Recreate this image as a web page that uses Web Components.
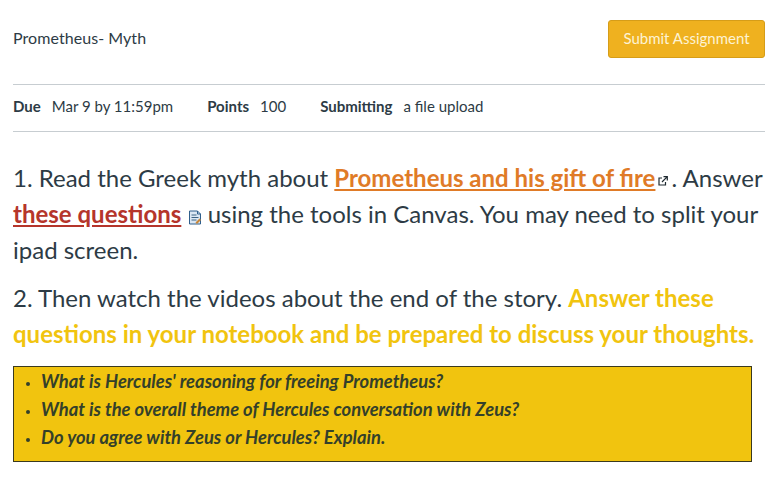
<!DOCTYPE html>
<html>
<head>
<meta charset="utf-8">
<title>Prometheus- Myth</title>
<style>
  html, body { margin: 0; background: #fff; }
  body { font-family: Lato, "Open Sans", sans-serif; color: #2d3b45; }
</style>
</head>
<body>
<assignment-page>
  <assignment-header slot="header" title="Prometheus- Myth" action="Submit Assignment"></assignment-header>
  <assignment-meta slot="meta">
    <meta-item label="Due">Mar 9 by 11:59pm</meta-item>
    <meta-item label="Points">100</meta-item>
    <meta-item label="Submitting">a file upload</meta-item>
  </assignment-meta>
  <assignment-body slot="body"></assignment-body>
</assignment-page>

<script>
class AssignmentPage extends HTMLElement {
  constructor() {
    super();
    this.attachShadow({ mode: "open" });
    this.shadowRoot.innerHTML = `
      <style>
        :host { display: block; padding: 20px 16px 0 13px; }
      </style>
      <slot name="header"></slot>
      <slot name="meta"></slot>
      <slot name="body"></slot>
    `;
  }
}

class AssignmentHeader extends HTMLElement {
  constructor() {
    super();
    this.attachShadow({ mode: "open" });
  }

  connectedCallback() {
    this.shadowRoot.innerHTML = `
      <style>
        :host { display: flex; justify-content: space-between; align-items: center; height: 38px; }
        h1 { margin: 0 0 3px; font-size: 16px; letter-spacing: .06px; font-weight: 400; color: #2d3b45; }
        button {
          box-sizing: border-box;
          width: 157px;
          height: 38px;
          padding: 0 0 3px;
          font: 400 15px Lato, sans-serif;
          color: #fdf3d4;
          background: #efb11f;
          border: 1px solid #d69d18;
          border-radius: 3px;
        }
      </style>
      <h1>${this.getAttribute("title")}</h1>
      <button>${this.getAttribute("action")}</button>
    `;
  }
}

class AssignmentMeta extends HTMLElement {
  constructor() {
    super();
    this.attachShadow({ mode: "open" });
    this.shadowRoot.innerHTML = `
      <style>
        :host {
          display: flex;
          gap: 34px;
          align-items: center;
          box-sizing: border-box;
          height: 48px;
          margin-top: 26px;
          padding-bottom: 4px;
          border-top: 1px solid #c7cdd1;
          border-bottom: 1px solid #c7cdd1;
        }
      </style>
      <slot></slot>
    `;
  }
}

class MetaItem extends HTMLElement {
  constructor() {
    super();
    this.attachShadow({ mode: "open" });
  }

  connectedCallback() {
    this.shadowRoot.innerHTML = `
      <style>
        :host { display: inline-flex; gap: 11px; font-size: 15px; color: #2d3b45; }
        b { font-weight: 700; }
      </style>
      <b>${this.getAttribute("label")}</b><span><slot></slot></span>
    `;
  }
}

class AssignmentBody extends HTMLElement {
  constructor() {
    super();
    this.attachShadow({ mode: "open" });
    this.shadowRoot.innerHTML = `
      <style>
        :host { display: block; padding-top: 28px; font-size: 24px; line-height: 36px; color: #2d3b45; }
        p { margin: 0 0 12px; }
        p:last-of-type { margin-bottom: 14px; }
        a, .hl { font-weight: 700; }
        .orange { color: #e07b27; text-decoration: underline; }
        .red { color: #b5352b; text-decoration: underline; }
        .yellow { color: #f1c40f; }
        .ext { vertical-align: 1px; margin: 0 -3px 0 3px; }
        .doc { vertical-align: -2px; margin-left: 1px; margin-right: -1px; }
        .box {
          box-sizing: border-box;
          width: 739px;
          height: 96px;
          background: #f1c40f;
          border: 1px solid #3a3a1e;
        }
        ul { margin: 0; padding: 0 0 0 12px; list-style: none; font-size: 18.38px; font-weight: 700; font-style: italic; line-height: 28px; color: #34402a; }
        li { display: flex; align-items: center; gap: 11px; }
        li::before { content: ""; width: 4px; height: 4px; margin-top: 6px; border-radius: 50%; background: #34402a; }
      </style>
      <p>1. Read the Greek myth about <a class="orange">Prometheus and his gift of fire</a><svg class="ext" width="10" height="10" viewBox="0 0 10 10" fill="none" stroke="#1f2a30" stroke-width="1.2"><path d="M4 2H1v7h6.5V6"/><path d="M5.5 .7h3.8v3.8M9.3 .7 4 6"/></svg> . Answer <a class="red">these questions</a> <svg class="doc" width="14" height="15" viewBox="0 0 14 15"><path d="M1.5 1h8l3 3v10h-11z" fill="#dbe7f3" stroke="#2f5f8c"/><path d="M9.5 1v3h3" fill="none" stroke="#2f5f8c"/><path d="M3.5 5h5M3.5 7.5h7M3.5 10h5" stroke="#3d6485"/><path d="M7.5 12.5l4-4 1.5 1.5-4 4z" fill="#c8873a"/></svg> using the tools in Canvas. You may need to split your ipad screen.</p>
      <p>2. Then watch the videos about the end of the story. <span class="hl yellow">Answer these questions in your notebook and be prepared to discuss your thoughts.</span></p>
      <div class="box">
        <ul>
          <li>What is Hercules' reasoning for freeing Prometheus?</li>
          <li>What is the overall theme of Hercules conversation with Zeus?</li>
          <li>Do you agree with Zeus or Hercules? Explain.</li>
        </ul>
      </div>
    `;
  }
}

customElements.define("assignment-page", AssignmentPage);
customElements.define("assignment-header", AssignmentHeader);
customElements.define("assignment-meta", AssignmentMeta);
customElements.define("meta-item", MetaItem);
customElements.define("assignment-body", AssignmentBody);
</script>
</body>
</html>
